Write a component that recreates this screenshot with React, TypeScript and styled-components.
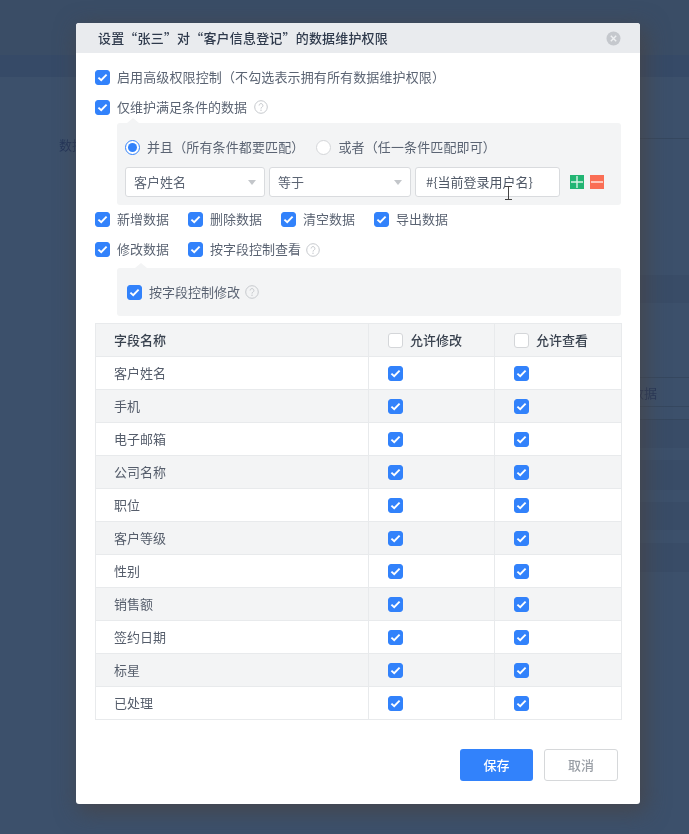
import React from "react";
import styled, { createGlobalStyle } from "styled-components";

const Global = createGlobalStyle`
  html, body { margin: 0; padding: 0; height: 100%; }
  body {
    font-family: "Noto Sans CJK SC", "Liberation Sans", sans-serif;
    background: #3c506b;
    overflow: hidden;
    text-spacing-trim: space-all;
  }
  * { box-sizing: border-box; }
`;

const Page = styled.div`
  position: relative;
  width: 689px;
  height: 834px;
  overflow: hidden;
  display: flex;
  flex-direction: column;
  background: #3c506b;
  filter: blur(0.3px);
`;
const Top = styled.div<{ $h: number; $c: string }>`
  height: ${(p) => p.$h}px;
  flex: none;
  background: ${(p) => p.$c};
`;
const Columns = styled.div`
  flex: 1;
  display: flex;
`;
const LeftCol = styled.div`
  width: 340px;
  padding: 60px 0 0 59px;
  font-size: 13px;
  line-height: 16px;
  color: #24365a;
`;
const RightCol = styled.div`
  flex: 1;
  display: flex;
  flex-direction: column;
`;
const Band = styled.div<{ $h: number; $dark?: boolean; $line?: boolean }>`
  height: ${(p) => p.$h}px;
  flex: none;
  display: flex;
  align-items: center;
  justify-content: flex-end;
  padding-right: 32px;
  font-size: 13px;
  color: #24365a;
  background: ${(p) => (p.$dark ? "#394c67" : "#3c506b")};
  border-bottom: ${(p) => (p.$line ? "1px solid #35475f" : "none")};
`;
const Modal = styled.div`
  position: absolute;
  left: 76px;
  top: 23px;
  width: 564px;
  height: 781px;
  background: #fff;
  border-radius: 3px;
  box-shadow: 4px 6px 22px 2px rgba(72, 66, 66, 0.72);
  display: flex;
  flex-direction: column;
  overflow: hidden;
`;
const Header = styled.div`
  height: 30px;
  flex: none;
  background: #e9ebee;
  display: flex;
  align-items: center;
  justify-content: space-between;
  padding: 0 19px 0 22px;
  font-size: 13px;
  letter-spacing: 0.18px;
  font-weight: 500;
  color: #2f3a4c;
`;
const HeaderTitle = styled.span`
  margin-bottom: 2px;
`;
const Body = styled.div`
  flex: 1;
  display: flex;
  flex-direction: column;
  padding: 9px 19px 0;
`;
const Row = styled.div<{ $h?: number; $gap?: number }>`
  display: flex;
  align-items: center;
  height: ${(p) => p.$h ?? 30}px;
  gap: ${(p) => p.$gap ?? 0}px;
`;
const Check = styled.label`
  display: inline-flex;
  align-items: center;
  gap: 7px;
  font-size: 13px;
  color: #5b6473;
  white-space: nowrap;
`;
const Label = styled.span<{ $wide?: boolean }>`
  margin-bottom: 2px;
  letter-spacing: ${(p) => (p.$wide ? "0.12px" : "0")};
`;
const Box = styled.span<{ $on?: boolean }>`
  width: 15px;
  height: 15px;
  flex: none;
  border-radius: 3px;
  display: flex;
  align-items: center;
  justify-content: center;
  background: ${(p) => (p.$on ? "#3282fb" : "#fff")};
  border: 1px solid ${(p) => (p.$on ? "#3282fb" : "#d4d6d9")};
`;
const HelpWrap = styled.span<{ $m: number }>`
  display: inline-flex;
  margin-left: ${(p) => p.$m}px;
`;
const Panel = styled.div<{ $arrow: number }>`
  position: relative;
  margin-left: 22px;
  background: #f3f4f5;
  border-radius: 3px;
  &::before {
    content: "";
    position: absolute;
    top: -5px;
    left: ${(p) => p.$arrow}px;
    border-left: 6px solid transparent;
    border-right: 6px solid transparent;
    border-bottom: 5px solid #f3f4f5;
  }
`;
const CondPanel = styled(Panel)`
  height: 82px;
  margin-top: 1px;
  padding: 9px 8px 0;
`;
const FieldPanel = styled(Panel)`
  height: 48px;
  margin-top: 3px;
  padding: 0 10px;
  display: flex;
  align-items: center;
`;
const Radio = styled.label`
  display: inline-flex;
  align-items: center;
  gap: 7px;
  font-size: 13px;
  color: #5b6473;
  white-space: nowrap;
`;
const RadioDot = styled.span<{ $on?: boolean }>`
  width: 15px;
  height: 15px;
  border-radius: 50%;
  background: #fff;
  border: 1px solid ${(p) => (p.$on ? "#3282fb" : "#d4d6d9")};
  display: inline-flex;
  align-items: center;
  justify-content: center;
  &::after {
    content: "";
    width: 9px;
    height: 9px;
    border-radius: 50%;
    background: ${(p) => (p.$on ? "#3282fb" : "transparent")};
  }
`;
const CondRow = styled(Row)`
  margin-top: 5px;
`;
const Select = styled.div<{ $w: number }>`
  width: ${(p) => p.$w}px;
  height: 30px;
  background: #fff;
  border: 1px solid #d9dbde;
  border-radius: 3px;
  display: flex;
  align-items: center;
  justify-content: space-between;
  padding: 0 8px;
  font-size: 13px;
  color: #5b6473;
  &::after {
    content: "";
    border-left: 4.5px solid transparent;
    border-right: 4.5px solid transparent;
    border-top: 5px solid #c3c6ca;
    margin-top: 1px;
  }
`;
const Input = styled.div`
  position: relative;
  width: 145px;
  height: 30px;
  background: #fff;
  border: 1px solid #d9dbde;
  border-radius: 3px;
  display: flex;
  align-items: center;
  padding: 0 10px;
  font-size: 13px;
  color: #4f5866;
`;
const Cursor = styled.svg`
  position: absolute;
  left: 88px;
  top: 18px;
`;
const Square = styled.span<{ $c: string }>`
  width: 14px;
  height: 14px;
  background: ${(p) => p.$c};
  display: inline-flex;
`;
const SquareGroup = styled.div`
  display: flex;
  gap: 6px;
  margin-left: 6px;
`;
const Table = styled.table`
  width: 526px;
  margin-top: 7px;
  border-collapse: collapse;
  table-layout: fixed;
  font-size: 13px;
  color: #555d6b;
`;
const Col = styled.col<{ $w: number }>`
  width: ${(p) => p.$w}px;
`;
const Th = styled.th<{ $first?: boolean }>`
  height: 33px;
  padding: 0 0 ${(p) => (p.$first ? "2px" : "0")} ${(p) => (p.$first ? "18px" : "19px")};
  background: #f3f4f5;
  border: 1px solid #e8eaec;
  text-align: left;
  font-weight: 500;
  color: #39424f;
`;
const Tr = styled.tr<{ $even: boolean }>`
  background: ${(p) => (p.$even ? "#f3f4f5" : "#fff")};
`;
const Td = styled.td`
  height: 33px;
  padding: 0 0 0 19px;
  border: 1px solid #e8eaec;
`;
const NameTd = styled(Td)`
  padding: 0 0 2px 18px;
`;
const HeadCell = styled.div`
  display: flex;
  align-items: center;
  gap: 7px;
`;
const Footer = styled.div`
  display: flex;
  justify-content: flex-end;
  gap: 11px;
  margin-top: 29px;
  padding-right: 3px;
`;
const Btn = styled.button<{ $primary?: boolean }>`
  width: ${(p) => (p.$primary ? 73 : 74)}px;
  height: 32px;
  border-radius: 3px;
  font-family: inherit;
  font-size: 13px;
  font-weight: 500;
  padding: 0 0 2px;
  background: ${(p) => (p.$primary ? "#3282fb" : "#fff")};
  color: ${(p) => (p.$primary ? "#fff" : "#9a9fa6")};
  border: ${(p) => (p.$primary ? "none" : "1px solid #d6d8da")};
`;

const Tick = () => (
  <svg width="11" height="9" viewBox="0 0 11 9" fill="none">
    <path d="M1.4 4.6 L4.2 7.2 L9.6 1.6" stroke="#fff" strokeWidth="1.9" />
  </svg>
);
const CB = ({ on = true }: { on?: boolean }) => <Box $on={on}>{on && <Tick />}</Box>;
const Help = ({ m = 5 }: { m?: number }) => (
  <HelpWrap $m={m}>
    <svg width="14" height="14" viewBox="0 0 14 14" fill="none">
      <circle cx="7" cy="7" r="6.3" stroke="#c6c9cd" strokeWidth="1" />
      <path d="M5.1 5.5a1.9 1.9 0 1 1 2.9 1.6c-.7.4-1 .8-1 1.5" stroke="#c6c9cd" strokeWidth="1" />
      <circle cx="7" cy="10.3" r=".7" fill="#c6c9cd" />
    </svg>
  </HelpWrap>
);
const fields = ["客户姓名","手机","电子邮箱","公司名称","职位","客户等级","性别","销售额","签约日期","标星","已处理"];

export default function App() {
  return (
    <Page>
      <Global />
      <Top $h={55} $c="#3a4d66" />
      <Top $h={22} $c="#364a67" />
      <Columns>
        <LeftCol>数据</LeftCol>
        <RightCol>
          <Band $h={62} $line />
          <Band $h={136} />
          <Band $h={28} $dark />
          <Band $h={75} $line />
          <Band $h={29} $line>数据</Band>
          <Band $h={13} $line />
          <Band $h={28} $dark />
          <Band $h={12} />
          <Band $h={30} $dark />
          <Band $h={12} />
          <Band $h={28} $dark />
          <Band $h={13} />
          <Band $h={29} $dark />
        </RightCol>
      </Columns>
      <Modal>
        <Header>
          <HeaderTitle>设置“张三”对“客户信息登记”的数据维护权限</HeaderTitle>
          <svg width="15" height="15" viewBox="0 0 15 15">
            <circle cx="7.5" cy="7.5" r="7" fill="#c5c8cd" />
            <path d="M4.8 4.8l5.4 5.4M10.2 4.8l-5.4 5.4" stroke="#eef0f2" strokeWidth="1.4" />
          </svg>
        </Header>
        <Body>
          <Row><Check><CB /><Label $wide>启用高级权限控制（不勾选表示拥有所有数据维护权限）</Label></Check></Row>
          <Row><Check><CB /><Label>仅维护满足条件的数据</Label></Check><Help m={7} /></Row>
          <CondPanel $arrow={10}>
            <Row $h={30} $gap={12}>
              <Radio><RadioDot $on /><Label $wide>并且（所有条件都要匹配）</Label></Radio>
              <Radio><RadioDot /><Label $wide>或者（任一条件匹配即可）</Label></Radio>
            </Row>
            <CondRow $h={30} $gap={4}>
              <Select $w={140}><Label>客户姓名</Label></Select>
              <Select $w={142}><Label>等于</Label></Select>
              <Input>
                <Label>#{"{当前登录用户名}"}</Label>
                <Cursor width="9" height="14" viewBox="0 0 9 14" fill="none">
                  <path d="M1 .5h7M1 13.5h7M4.5 .5v13" stroke="#444" strokeWidth="1" />
                </Cursor>
              </Input>
              <SquareGroup>
                <Square $c="#22b573">
                  <svg width="14" height="14" viewBox="0 0 14 14"><path d="M7 1v12M1 7h12" stroke="#d8f3e6" strokeWidth="1.4" /></svg>
                </Square>
                <Square $c="#fa6e55">
                  <svg width="14" height="14" viewBox="0 0 14 14"><path d="M1 7h12" stroke="#ffe3dc" strokeWidth="1.6" /></svg>
                </Square>
              </SquareGroup>
            </CondRow>
          </CondPanel>
          <Row $h={29} $gap={19}>
            <Check><CB /><Label>新增数据</Label></Check>
            <Check><CB /><Label>删除数据</Label></Check>
            <Check><CB /><Label>清空数据</Label></Check>
            <Check><CB /><Label>导出数据</Label></Check>
          </Row>
          <Row $h={31} $gap={19}>
            <Check><CB /><Label>修改数据</Label></Check>
            <Row $h={31}>
              <Check><CB /><Label>按字段控制查看</Label></Check>
              <Help />
            </Row>
          </Row>
          <FieldPanel $arrow={18}>
            <Check><CB /><Label>按字段控制修改</Label></Check>
            <Help />
          </FieldPanel>
          <Table>
            <colgroup><Col $w={273} /><Col $w={126} /><Col $w={127} /></colgroup>
            <thead>
              <tr>
                <Th $first>字段名称</Th>
                <Th><HeadCell><CB on={false} /><Label>允许修改</Label></HeadCell></Th>
                <Th><HeadCell><CB on={false} /><Label>允许查看</Label></HeadCell></Th>
              </tr>
            </thead>
            <tbody>
              {fields.map((f, i) => (
                <Tr key={f} $even={i % 2 === 1}>
                  <NameTd>{f}</NameTd>
                  <Td><CB /></Td>
                  <Td><CB /></Td>
                </Tr>
              ))}
            </tbody>
          </Table>
          <Footer>
            <Btn $primary>保存</Btn>
            <Btn>取消</Btn>
          </Footer>
        </Body>
      </Modal>
    </Page>
  );
}
